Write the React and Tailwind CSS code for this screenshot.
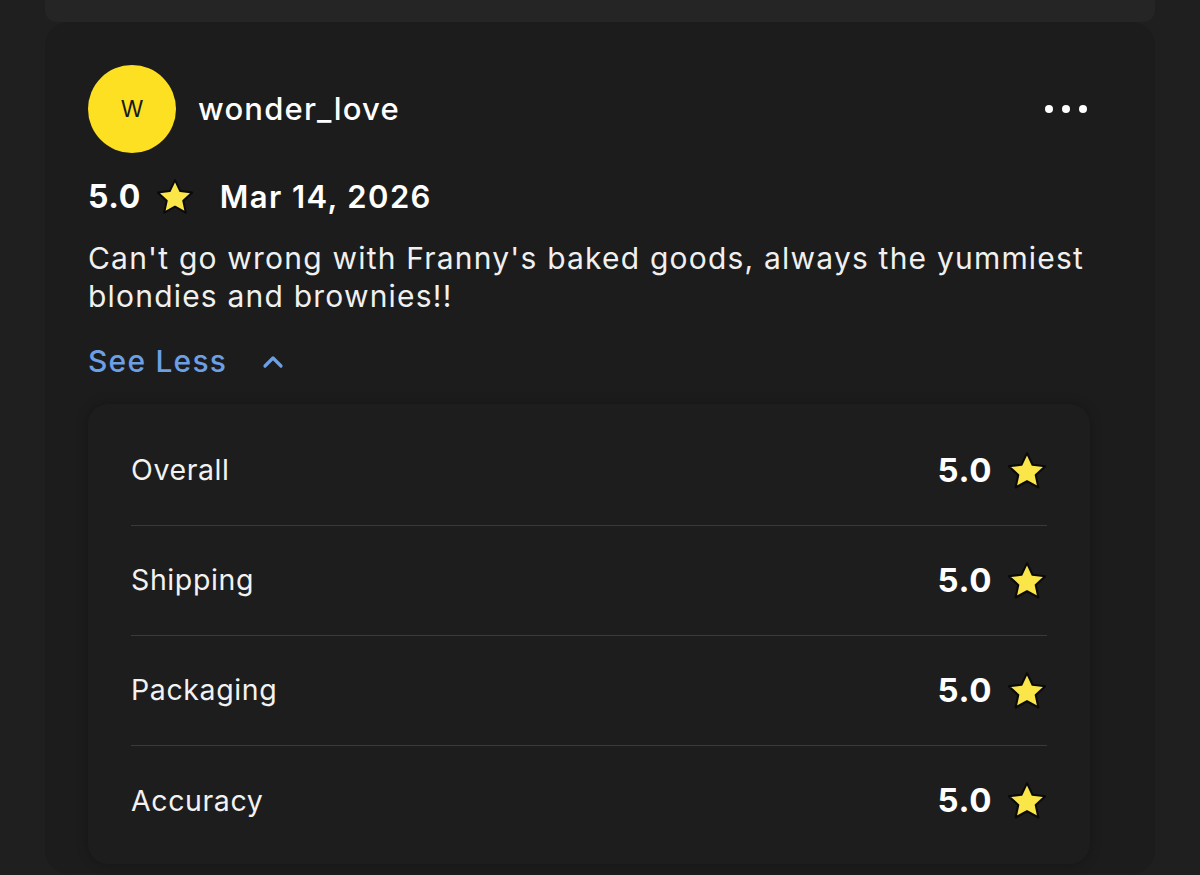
import { ChevronUp } from "lucide-react";

const ratings = [
  { label: "Overall", value: "5.0" },
  { label: "Shipping", value: "5.0" },
  { label: "Packaging", value: "5.0" },
  { label: "Accuracy", value: "5.0" },
];

function Star({ className }) {
  return (
    <svg viewBox="2 2 20 20" className={className}>
      <path
        d="M12 2.6l2.9 6.1 6.7.8-5 4.6 1.4 6.6L12 17.4l-6 3.3 1.4-6.6-5-4.6 6.7-.8z"
        fill="#fbe64a"
        stroke="#0a0a0a"
        strokeWidth="1.1"
        strokeLinejoin="round"
      />
    </svg>
  );
}

export default function App() {
  return (
    <div
      className="min-h-screen w-full bg-[#1f1f1f] text-white overflow-hidden"
      style={{ fontFamily: "Inter, 'Noto Sans', sans-serif" }}
    >
      {/* previous card edge */}
      <div className="h-[22px] mx-[45px] bg-[#252525] rounded-b-[12px]" />

      {/* Review card */}
      <div className="mx-[45px] bg-[#1c1c1c] rounded-[24px] pl-[43px] pr-[65px] pt-[43px] pb-[10px]">
        {/* Header */}
        <div className="flex items-center">
          <div className="w-[88px] h-[88px] rounded-full bg-[#fde021] flex items-center justify-center text-[#1a1a1a] text-[23px]">
            W
          </div>
          <span className="ml-[22px] text-[31px] font-medium tracking-[1.2px]">wonder_love</span>
          <div className="ml-auto mr-[3px] flex items-center gap-[9px]">
            <span className="w-[8px] h-[8px] rounded-full bg-white" />
            <span className="w-[8px] h-[8px] rounded-full bg-white" />
            <span className="w-[8px] h-[8px] rounded-full bg-white" />
          </div>
        </div>

        {/* Score + date */}
        <div className="flex items-center mt-[22px] h-[44px]">
          <span className="text-[32px] font-bold tracking-[0.6px]">5.0</span>
          <Star className="w-[36px] h-[36px] ml-[16px]" />
          <span className="ml-[27px] text-[31px] font-semibold tracking-[1.4px]">Mar 14, 2026</span>
        </div>

        {/* Body */}
        <p className="mt-[20px] text-[30px] leading-[38px] text-[#f0f0f0] tracking-[1.2px]">
          Can't go wrong with Franny's baked goods, always the yummiest
          <br />
          blondies and brownies!!
        </p>

        <button className="mt-[24px] flex items-center text-[#6c9fe4] text-[30px] font-medium tracking-[1.2px]">
          See Less
          <ChevronUp className="w-[32px] h-[32px] ml-[30px]" strokeWidth={2.4} />
        </button>

        {/* Ratings panel */}
        <div className="mt-[20px] bg-[#1d1d1d] rounded-[20px] px-[43px] pt-[12px] pb-[8px] shadow-[0_0_12px_rgba(0,0,0,0.25)]">
          {ratings.map((r, i) => (
            <div
              key={r.label}
              className={`flex items-center justify-between h-[110px] ${
                i < ratings.length - 1 ? "border-b border-[#3a3a3a]" : ""
              }`}
            >
              <span className="text-[28.5px] text-[#f2f2f2] tracking-[0.6px]">{r.label}</span>
              <div className="flex items-center">
                <span className="text-[33px] font-bold tracking-[0.6px]">{r.value}</span>
                <Star className="w-[38px] h-[38px] ml-[16px] mr-[1px]" />
              </div>
            </div>
          ))}
        </div>
      </div>
    </div>
  );
}
